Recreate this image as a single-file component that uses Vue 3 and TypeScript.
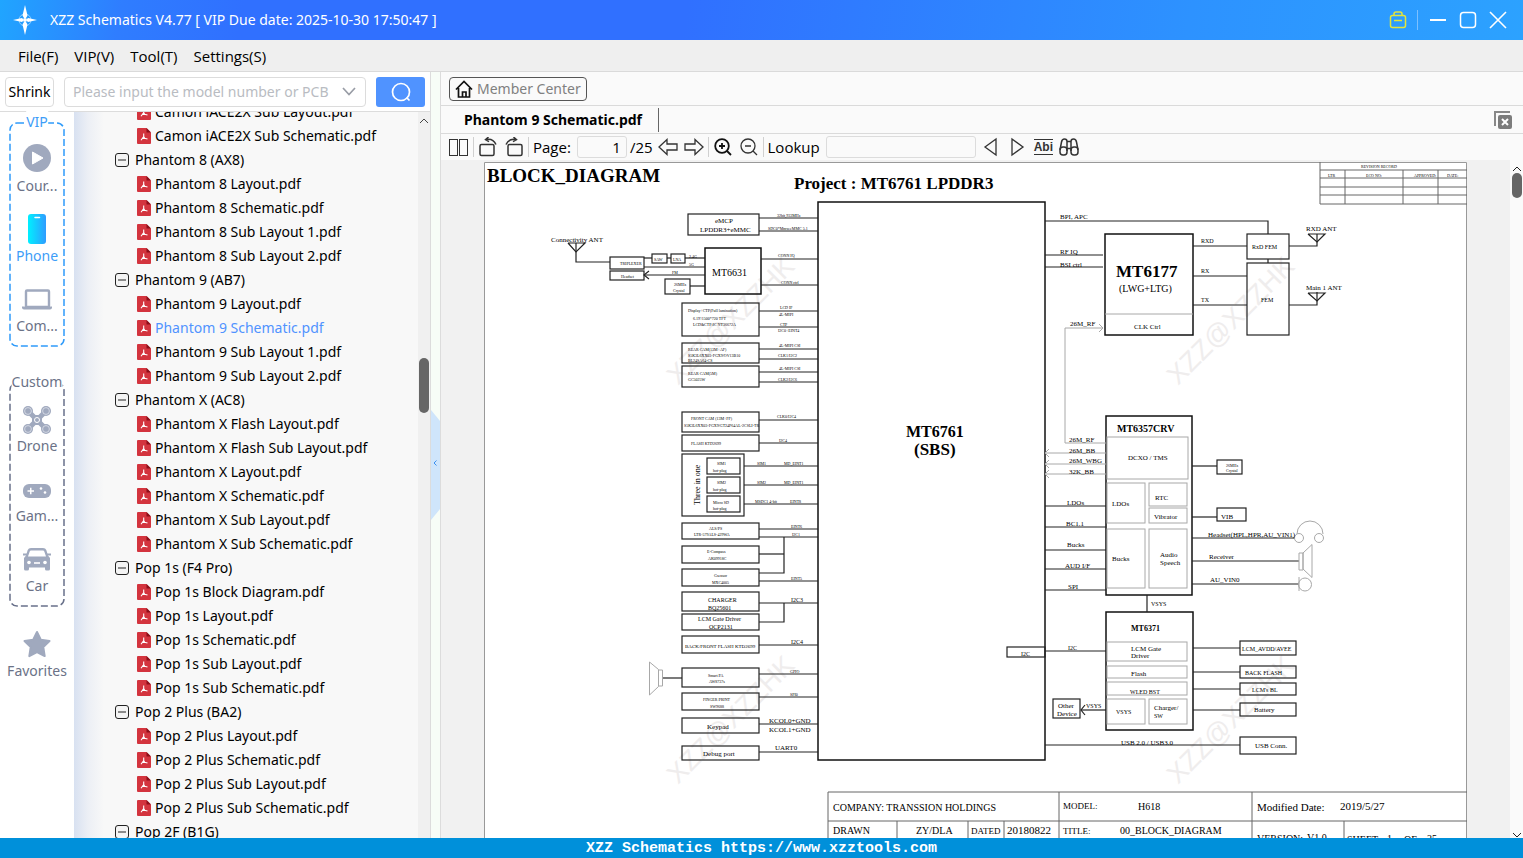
<script setup lang="ts">
import { ref } from 'vue'

interface Model {
  name: string
  files: string[]
}
interface RailItem {
  label: string
  icon: string
}
interface RailGroup {
  title: string
  tone: string
  items: RailItem[]
}
type Box = [x: number, y: number, w: number, h: number, tone?: string]
type Wire = [points: string, tone?: string]
type Label = [x: number, y: number, size: number, text: string, tone?: string]

const menus = ['File(F)', 'VIP(V)', 'Tool(T)', 'Settings(S)']
const keyword = ref('')
const lookup = ref('')
const page = ref('1')
const category = ref('Phone')
const current = ref('Phantom 9 Schematic.pdf')

const railGroups: RailGroup[] = [
  {
    title: 'VIP',
    tone: 'blue',
    items: [
      { label: 'Cour...', icon: 'course' },
      { label: 'Phone', icon: 'phone' },
      { label: 'Com...', icon: 'computer' },
    ],
  },
  {
    title: 'Custom',
    tone: 'gray',
    items: [
      { label: 'Drone', icon: 'drone' },
      { label: 'Gam...', icon: 'game' },
      { label: 'Car', icon: 'car' },
    ],
  },
]

const models: Model[] = [
  { name: '', files: ['Camon iACE2X Sub Layout.pdf', 'Camon iACE2X Sub Schematic.pdf'] },
  {
    name: 'Phantom 8 (AX8)',
    files: ['Phantom 8 Layout.pdf', 'Phantom 8 Schematic.pdf', 'Phantom 8 Sub Layout 1.pdf', 'Phantom 8 Sub Layout 2.pdf'],
  },
  {
    name: 'Phantom 9 (AB7)',
    files: ['Phantom 9 Layout.pdf', 'Phantom 9 Schematic.pdf', 'Phantom 9 Sub Layout 1.pdf', 'Phantom 9 Sub Layout 2.pdf'],
  },
  {
    name: 'Phantom X (AC8)',
    files: [
      'Phantom X Flash Layout.pdf',
      'Phantom X Flash Sub Layout.pdf',
      'Phantom X Layout.pdf',
      'Phantom X Schematic.pdf',
      'Phantom X Sub Layout.pdf',
      'Phantom X Sub Schematic.pdf',
    ],
  },
  {
    name: 'Pop 1s (F4 Pro)',
    files: ['Pop 1s Block Diagram.pdf', 'Pop 1s Layout.pdf', 'Pop 1s Schematic.pdf', 'Pop 1s Sub Layout.pdf', 'Pop 1s Sub Schematic.pdf'],
  },
  {
    name: 'Pop 2 Plus (BA2)',
    files: ['Pop 2 Plus Layout.pdf', 'Pop 2 Plus Schematic.pdf', 'Pop 2 Plus Sub Layout.pdf', 'Pop 2 Plus Sub Schematic.pdf'],
  },
  { name: 'Pop 2F (B1G)', files: [] },
]

// Schematic sheet: blocks, wires and labels in sheet coordinates.
const boxes: Box[] = [
  [818, 202, 227, 558, 'bold'],
  [688, 214, 71, 21],
  [705, 248, 56, 46, 'bold'],
  [610, 257, 34, 12],
  [610, 271, 34, 9],
  [652, 254, 15, 9],
  [671, 254, 14, 9],
  [665, 279, 25, 15],
  [682, 303, 77, 33],
  [682, 343, 77, 20],
  [682, 366, 77, 21],
  [682, 412, 77, 20],
  [682, 435, 77, 16],
  [682, 454, 62, 62],
  [707, 458, 33, 16],
  [707, 477, 33, 16],
  [707, 496, 33, 16],
  [682, 523, 77, 16],
  [682, 546, 77, 17],
  [682, 569, 77, 17],
  [682, 592, 77, 19],
  [682, 614, 77, 16],
  [682, 636, 77, 17],
  [682, 668, 77, 19],
  [682, 693, 77, 17],
  [682, 718, 77, 15],
  [682, 746, 77, 14],
  [1105, 234, 88, 101, 'bold'],
  [1247, 234, 42, 25],
  [1247, 263, 42, 72],
  [1106, 416, 86, 179, 'bold'],
  [1107, 437, 81, 42, 'light'],
  [1107, 483, 38, 40, 'light'],
  [1149, 483, 38, 23, 'light'],
  [1149, 508, 38, 15, 'light'],
  [1107, 529, 38, 59, 'light'],
  [1149, 529, 38, 59, 'light'],
  [1217, 460, 25, 14],
  [1217, 508, 29, 13],
  [1106, 612, 87, 118, 'bold'],
  [1107, 642, 80, 19, 'light'],
  [1107, 666, 80, 12, 'light'],
  [1107, 682, 80, 13, 'light'],
  [1107, 699, 38, 25, 'light'],
  [1149, 699, 38, 25, 'light'],
  [1007, 647, 38, 10],
  [1053, 699, 27, 19],
  [1240, 641, 56, 14],
  [1240, 666, 56, 12],
  [1240, 683, 56, 12],
  [1240, 703, 56, 13],
  [1240, 737, 56, 17],
]

const wires: Wire[] = [
  ['759,218 818,218'], ['759,231 818,231'],
  ['576,252 576,262 610,262'], ['568,243 585,243 576,252 568,243'], ['576,243 576,252'],
  ['644,258 652,258'], ['667,258 671,258'], ['685,258 705,258'], ['644,267 705,267'],
  ['644,275 705,275'], ['649,271 644,275 649,279'], ['690,286 705,286'],
  ['761,259 818,259'], ['761,285 818,285'],
  ['759,311 818,311'], ['759,327 818,327'], ['759,349 818,349'], ['759,359 818,359'],
  ['759,372 818,372'], ['759,382 818,382'], ['759,420 818,420'], ['759,443 818,443'],
  ['744,466 818,466'], ['744,485 818,485'], ['744,504 818,504'],
  ['759,529 818,529'], ['759,537 818,537'], ['759,554 784,554'], ['784,537 784,573 759,573'],
  ['759,581 818,581'], ['759,603 818,603'], ['784,603 784,622 759,622'], ['759,645 818,645'],
  ['662,678 682,678'], ['759,674 818,674'], ['759,697 818,697'], ['759,724 818,724'], ['759,752 818,752'],
  ['1045,221 1268,221 1268,234'], ['1268,259 1268,263'],
  ['1045,255 1103,255'], ['1045,267 1103,267'],
  ['1193,246 1247,246'], ['1193,276 1247,276'], ['1193,305 1247,305'],
  ['1289,246 1317,246 1317,234'], ['1308,234 1325,234 1317,242 1308,234'],
  ['1289,305 1317,305 1317,292'], ['1308,293 1325,293 1317,301 1308,293'],
  ['1105,314 1193,314', 'light'], ['1106,443 1065,443 1065,328 1103,328', 'light'], ['1099,324 1103,328 1099,332', 'light'],
  ['1045,453 1106,453', 'light'], ['1045,464 1106,464', 'light'], ['1045,474 1106,474', 'light'],
  ['1049,449 1045,453 1049,457', 'light'], ['1049,460 1045,464 1049,468', 'light'], ['1049,470 1045,474 1049,478', 'light'],
  ['1045,506 1106,506'], ['1045,527 1106,527'], ['1045,550 1106,550'], ['1045,569 1106,569'], ['1045,590 1106,590'],
  ['1192,466 1217,466'], ['1192,517 1217,517'], ['1192,538 1295,538'], ['1192,561 1299,561'], ['1192,584 1299,584'],
  ['1147,595 1147,612'], ['1045,651 1106,651'],
  ['1193,648 1240,648'], ['1193,672 1240,672'], ['1193,689 1240,689'], ['1193,710 1240,710'],
  ['1106,710 1081,710'], ['1085,705 1081,710 1085,715'],
  ['1045,745 1240,745'],
]

const titleBlock: Wire[] = [
  ['828,858 828,792 1467,792'], ['828,821 1467,821'], ['1059,792 1059,858'], ['1252,792 1252,858'],
  ['897,821 897,858'], ['968,821 968,858'], ['1004,821 1004,858'], ['1344,821 1344,858'],
  ['1320,170 1467,170'], ['1320,178 1467,178'], ['1320,187 1467,187'], ['1320,195 1467,195'],
  ['1467,204 1320,204 1320,162'], ['1345,170 1345,204'], ['1403,170 1403,204'], ['1438,170 1438,204'],
]

const labels: Label[] = [
  [487, 182, 19, 'BLOCK_DIAGRAM', 'strong'],
  [794, 189, 17, 'Project : MT6761 LPDDR3', 'strong'],
  [906, 437, 16, 'MT6761', 'strong'],
  [914, 455, 17, '(SBS)', 'strong'],
  [1116, 277, 17, 'MT6177', 'strong'],
  [1119, 292, 10, '(LWG+LTG)'],
  [1117, 432, 10, 'MT6357CRV', 'strong'],
  [1131, 631, 8, 'MT6371', 'strong'],
  [1361, 168, 4, 'REVISION RECORD'],
  [1328, 177, 4, 'LTR'], [1366, 177, 4, 'ECO NO:'], [1414, 177, 4, 'APPROVED:'], [1447, 177, 4, 'DATE:'],
  [715, 223, 7, 'eMCP'], [700, 232, 7, 'LPDDR3+eMMC'],
  [777, 217, 4, '32bit,933MHz'], [768, 230, 4, 'SDC0*Mmw.eMMC 5.1'],
  [551, 242, 7, 'Connectivity ANT'],
  [620, 265, 4, 'TRIPLEXER'], [621, 278, 4, 'Headset'], [654, 261, 4, 'SAW'], [673, 261, 4, 'LNA'],
  [689, 258, 4, '2.4G'], [689, 266, 4, '5G'], [672, 274, 4, 'FM'], [674, 286, 4, '26MHz'], [673, 292, 4, 'Crystal'],
  [712, 276, 10, 'MT6631'],
  [778, 257, 4, 'CONN IQ'], [781, 284, 4, 'CONN ctrl'],
  [688, 312, 4, 'Display+CTP(Full lamination)'], [693, 320, 4, '6.19\'/1500*720 TFT'], [693, 326, 4, 'LCD&CTP:IC NT36672A'],
  [780, 309, 4, 'LCD IF'], [779, 316, 4, '4L-MIPI'], [780, 326, 4, 'CTP'], [778, 332, 4, 'I2C0+EINT4'],
  [688, 351, 4, 'REAR CAM(13M+AF)'], [688, 357, 4, 'S5K3L6XX03-FGX9/OV13B10'], [688, 362, 4, 'BL24SA64-CS'],
  [779, 347, 4, '4L-MIPI CSI'], [778, 357, 4, 'CLK1/I2C2'],
  [688, 375, 4, 'REAR CAM(5M)'], [688, 381, 4, 'GC5025W'],
  [779, 370, 4, '4L-MIPI CSI'], [778, 381, 4, 'CLK2/I2C6'],
  [691, 420, 4, 'FRONT CAM (13M+FF)'], [684, 427, 4, 'S5K3L6XX03-FGX9/GT24P64AL-2CSLI-TR'], [777, 418, 4, 'CLK0/I2C4'],
  [691, 445, 4, 'FLASH KTD2699'], [779, 442, 4, 'I2C4'],
  [717, 465, 4, 'SIM1'], [713, 472, 4, 'hot-plug'], [717, 484, 4, 'SIM2'], [713, 491, 4, 'hot-plug'], [713, 504, 4, 'Micro SD'], [713, 510, 4, 'hot-plug'],
  [757, 465, 4, 'SIM1'], [784, 465, 4, 'MD_EINT1'], [757, 484, 4, 'SIM2'], [784, 484, 4, 'MD_EINT1'], [755, 503, 4, 'MSDC1 4-bit'], [790, 503, 4, 'EINT8'],
  [709, 530, 4, 'ALS/PS'], [694, 536, 4, 'LTR-579ALS-429WA'], [791, 528, 4, 'EINT6'], [792, 536, 4, 'I2C1'],
  [707, 553, 4, 'E-Compass'], [708, 560, 4, 'AK09918C'],
  [714, 577, 4, 'Gsensor'], [712, 584, 4, 'MXC4005'], [791, 580, 4, 'EINT5'],
  [708, 602, 6, 'CHARGER'], [708, 610, 6, 'BQ25601'], [791, 602, 6, 'I2C3'],
  [698, 621, 6, 'LCM Gate Driver'], [709, 629, 6, 'OCP2131'],
  [685, 648, 5, 'BACK/FRONT FLASH KTD2699'], [791, 644, 6, 'I2C4'],
  [708, 677, 4, 'Smart PA'], [709, 683, 4, 'AW8737s'], [790, 673, 4, 'GPIO'],
  [703, 701, 4, 'FINGER PRINT'], [710, 708, 4, 'SW9688'], [790, 696, 4, 'SPI0'],
  [707, 729, 7, 'Keypad'], [769, 723, 7, 'KCOL0+GND'], [769, 732, 7, 'KCOL1+GND'],
  [703, 756, 7, 'Debug port'], [775, 750, 7, 'UART0'],
  [1060, 219, 7, 'BPI, APC'], [1060, 254, 7, 'RF IQ'], [1060, 267, 7, 'BSI ctrl'],
  [1201, 243, 6, 'RXD'], [1201, 273, 6, 'RX'], [1201, 302, 6, 'TX'],
  [1306, 231, 7, 'RXD ANT'], [1306, 290, 7, 'Main 1 ANT'],
  [1252, 249, 6, 'RxD FEM'], [1261, 302, 6, 'FEM'],
  [1134, 329, 7, 'CLK Ctrl'], [1070, 326, 7, '26M_RF'],
  [1069, 442, 7, '26M_RF'], [1069, 453, 7, '26M_BB'], [1069, 463, 7, '26M_WBG'], [1069, 474, 7, '32K_BB'],
  [1128, 460, 7, 'DCXO / TMS'], [1112, 506, 7, 'LDOs'], [1155, 500, 7, 'RTC'], [1154, 519, 7, 'Vibrator'],
  [1112, 561, 7, 'Bucks'], [1160, 557, 7, 'Audio'], [1160, 565, 7, 'Speech'],
  [1067, 505, 7, 'LDOs'], [1066, 526, 7, 'BC1.1'], [1067, 547, 7, 'Bucks'], [1065, 568, 7, 'AUD I/F'], [1068, 589, 7, 'SPI'],
  [1226, 467, 4, '26MHz'], [1226, 472, 4, 'Crystal'], [1221, 519, 7, 'VIB'],
  [1208, 537, 7, 'Headset(HPL,HPR,AU_VIN1)'], [1209, 559, 7, 'Receiver'], [1210, 582, 7, 'AU_VIN0'],
  [1151, 606, 6, 'VSYS'], [1021, 656, 6, 'I2C'], [1068, 650, 6, 'I2C'],
  [1131, 651, 7, 'LCM Gate'], [1131, 658, 7, 'Driver'], [1131, 676, 7, 'Flash'], [1130, 694, 6, 'WLED BST'],
  [1116, 714, 6, 'VSYS'], [1154, 710, 7, 'Charger/'], [1154, 718, 6, 'SW'],
  [1058, 708, 7, 'Other'], [1057, 716, 7, 'Device'], [1086, 708, 6, 'VSYS'],
  [1242, 651, 6, 'LCM_AVDD/AVEE'], [1245, 675, 6, 'BACK FLASH'], [1252, 692, 6, "LCM's BL"], [1254, 712, 7, 'Battery'], [1255, 748, 7, 'USB Conn.'],
  [1121, 745, 7, 'USB 2.0 / USB3.0'],
  [833, 811, 10, 'COMPANY: TRANSSION HOLDINGS'], [833, 834, 10, 'DRAWN'], [916, 834, 10, 'ZY/DLA'], [971, 834, 9, 'DATED'], [1007, 834, 11, '20180822'],
  [1063, 809, 9, 'MODEL:'], [1138, 810, 10, 'H618'], [1063, 834, 9, 'TITLE:'], [1120, 834, 10, '00_BLOCK_DIAGRAM'],
  [1257, 811, 11, 'Modified Date:'], [1340, 810, 11, '2019/5/27'],
  [1257, 842, 10, 'VERSION:'], [1307, 841, 10, 'V1.0'], [1347, 843, 10, 'SHEET'], [1387, 842, 10, '1'], [1404, 843, 10, 'OF'], [1427, 842, 10, '25'],
]

const watermarks = [
  [730, 320],
  [1230, 320],
  [730, 719],
  [1230, 719],
]
</script>

<template>
  <div class="app">
    <header class="titlebar">
      <svg class="logo" width="26" height="30" viewBox="0 0 26 30">
        <circle cx="13" cy="15" r="6" fill="none" stroke="#8fd0ff" stroke-width="1" />
        <path d="M13 0l2.5 10.500-1.500 2.500h-2l-1.500-2.500zM13 30l2.500-10.500-1.500-2.500h-2l-1.500 2.500zM1 15l9-2 1 1v2l-1 1zM25 15l-9-2-1 1v2l1 1z" fill="#fff" />
        <circle cx="13" cy="15" r="2" fill="#fff" />
      </svg>
      <h1>XZZ Schematics V4.77 [ VIP Due date: 2025-10-30 17:50:47 ]</h1>
      <div class="window-tools">
        <button type="button" aria-label="Toolbox">
          <svg width="18" height="18" viewBox="0 0 18 18" fill="none" stroke="#e3e53c" stroke-width="1.500">
            <rect x="1.500" y="4.500" width="15" height="12" rx="2" /><path d="M5 4.500V3q0-2 2-2h4q2 0 2 2v1.500M5 9.500h8" />
          </svg>
        </button>
        <span class="bar"></span>
        <button type="button" aria-label="Minimize">
          <svg width="18" height="18" viewBox="0 0 18 18" stroke="#fff" stroke-width="2"><path d="M1 9h16" /></svg>
        </button>
        <button type="button" aria-label="Maximize">
          <svg width="18" height="18" viewBox="0 0 18 18" fill="none" stroke="#fff" stroke-width="1.500"><rect x="1.500" y="1.500" width="15" height="15" rx="3" /></svg>
        </button>
        <button type="button" aria-label="Close">
          <svg width="18" height="18" viewBox="0 0 18 18" stroke="#fff" stroke-width="1.600"><path d="M1 1l16 16M17 1L1 17" /></svg>
        </button>
      </div>
    </header>

    <nav class="menubar">
      <button v-for="m in menus" :key="m" type="button">{{ m }}</button>
    </nav>

    <main class="workspace">
      <section class="browser">
        <form class="search" @submit.prevent>
          <button type="button" class="shrink">Shrink</button>
          <div class="combo">
            <input v-model="keyword" type="text" aria-label="Model number or PCB" placeholder="Please input the model number or PCB" />
            <button type="button" aria-label="Show history">
              <svg width="14" height="9" viewBox="0 0 14 9" fill="none" stroke="#999da6" stroke-width="1.700"><path d="M1 1l6 6.500L13 1" /></svg>
            </button>
          </div>
          <button type="submit" class="go" aria-label="Search">
            <svg width="20" height="20" viewBox="0 0 20 20" fill="none" stroke="#fff" stroke-width="1.700"><circle cx="10" cy="10" r="8.500" /><path d="M15.500 15.500l3 3" /></svg>
          </button>
        </form>

        <div class="panes">
          <aside class="rail">
            <section v-for="g in railGroups" :key="g.title" class="group" :class="g.tone">
              <svg class="frame" width="56" height="225" viewBox="0 0 56 225" fill="none">
                <rect x="1" y="1" width="54" height="223" rx="7" stroke-width="1.500" stroke-dasharray="7 3" />
              </svg>
              <h2>{{ g.title }}</h2>
              <button v-for="i in g.items" :key="i.label" type="button" class="cat" :class="{ on: i.label === category }" @click="category = i.label">
                <svg width="32" height="32" viewBox="0 0 32 32" fill="#a0a9be">
                  <template v-if="i.icon === 'course'">
                    <circle cx="16" cy="16" r="14" /><path d="M11.500 10v12L22 16z" fill="#fff" stroke="#fff" stroke-linejoin="round" />
                  </template>
                  <template v-else-if="i.icon === 'phone'">
                    <defs><linearGradient id="phone-fill"><stop offset="0" stop-color="#00f0ff" /><stop offset="1" stop-color="#2f9cff" /></linearGradient></defs>
                    <rect x="7" y="2" width="18" height="30" rx="3" fill="url(#phone-fill)" /><path d="M14 5.500h4.500" stroke="#fff" stroke-width="1.500" stroke-linecap="round" />
                  </template>
                  <template v-else-if="i.icon === 'computer'">
                    <rect x="5" y="8.500" width="23" height="16.500" rx="1" fill="none" stroke="#a0a9be" stroke-width="2.400" /><path d="M1 24.500h30v1q0 2-2 2H3q-2 0-2-2z" />
                  </template>
                  <template v-else-if="i.icon === 'drone'">
                    <path d="M8 10l16 16M24 10L8 26" stroke="#a0a9be" stroke-width="5" />
                    <g v-for="p in [[7, 9], [25, 9], [7, 27], [25, 27]]" :key="p.join()">
                      <circle :cx="p[0]" :cy="p[1]" r="5" /><circle :cx="p[0]" :cy="p[1]" r="3.400" fill="none" stroke="#e6e9f0" stroke-width="0.700" />
                    </g>
                    <rect x="11" y="13" width="10" height="10" rx="2" /><circle cx="16" cy="18" r="2.500" fill="#a0a9be" stroke="#fff" />
                  </template>
                  <template v-else-if="i.icon === 'game'">
                    <rect x="2" y="12" width="28" height="14" rx="6" />
                    <path d="M6.500 19h6.500M9.750 15.750v6.500" stroke="#fff" stroke-width="1.500" /><circle cx="20" cy="16.500" r="1.300" fill="#fff" /><circle cx="24" cy="20.500" r="1.300" fill="#fff" />
                  </template>
                  <template v-else>
                    <path d="M10 6h12q2.500 0 3.300 2L27 13.500l2 2.500v11q0 1.500-1.500 1.500h-2q-1.500 0-1.500-1.500v-1.500H8V27q0 1.500-1.500 1.500h-2Q3 28.500 3 27V16l2-2.500L6.700 8Q7.500 6 10 6z" /><path d="M2 12.500h5M25 12.500h5" stroke="#a0a9be" stroke-width="2" /><path d="M10 8.500h12q1 0 1.300 1l1.700 5H7l1.700-5q.3-1 1.300-1z" fill="#fff" />
                    <circle cx="8" cy="20.500" r="1.800" fill="#fff" /><circle cx="24" cy="20.500" r="1.800" fill="#fff" /><path d="M13 21h6" stroke="#fff" stroke-width="1.600" />
                  </template>
                </svg>
                <span>{{ i.label }}</span>
              </button>
            </section>
            <button type="button" class="cat favorites">
              <svg width="32" height="32" viewBox="0 0 32 32" fill="#a0a9be" stroke="#a0a9be" stroke-width="2" stroke-linejoin="round">
                <path d="M16 5l3.800 7.700 8.700 1.300-6.200 6.100 1.400 9L16 25.100l-7.700 4 1.400-9-6.200-6.100 8.700-1.300z" />
              </svg>
              <span>Favorites</span>
            </button>
          </aside>

          <div class="tree">
            <ul>
              <li v-for="m in models" :key="m.name">
                <button v-if="m.name" type="button" class="model">
                  <svg width="14" height="14" viewBox="0 0 14 14" fill="#f4f4f4" stroke="#222"><rect x="0.500" y="0.500" width="13" height="13" rx="2.500" /><path d="M3 7h8" /></svg>
                  {{ m.name }}
                </button>
                <ul>
                  <li v-for="f in m.files" :key="f">
                    <button type="button" class="file" :class="{ open: f === current }" @click="current = f">
                      <svg width="14" height="16" viewBox="0 0 14 16">
                        <path d="M1 0h8.500L14 4.500V15q0 1-1 1H1q-1 0-1-1V1q0-1 1-1z" fill="#d3343e" /><path d="M9.500 0L14 4.500H9.500z" fill="#8b0f1a" />
                        <path d="M6.700 5.500v3L4 12.300M6.700 8.500l1 1.700 2.800.8M5.300 10.400l2.600-.3" fill="none" stroke="#fff" stroke-width="1.100" />
                      </svg>
                      {{ f }}
                    </button>
                  </li>
                </ul>
              </li>
            </ul>
          </div>
          <div class="scroll">
            <svg width="10" height="6" viewBox="0 0 10 6" fill="none" stroke="#444"><path d="M1 5l4-4 4 4" /></svg>
            <span class="thumb"></span>
          </div>
        </div>
      </section>

      <div class="splitter">
        <button type="button" aria-label="Collapse panel">
          <svg width="9" height="110" viewBox="0 0 9 110"><path d="M0 0l9 11v88l-9 11z" fill="#cfe5fb" /><path d="M5.500 50.500L3 53l2.500 2.500" fill="none" stroke="#3b8ff0" /></svg>
        </button>
      </div>

      <section class="reader">
        <div class="member-row">
          <button type="button" class="member">
            <svg width="18" height="18" viewBox="0 0 18 18" fill="none" stroke="#111" stroke-width="1.700"><path d="M1 9.500L9 1.500l8 8M3.500 8v9h11V8M7.500 17v-5h3.500v5" /></svg>
            Member Center
          </button>
        </div>
        <div class="tabs">
          <button type="button" class="tab">{{ current }}</button>
          <button type="button" class="close-all" aria-label="Close all tabs">
            <svg width="18" height="18" viewBox="0 0 18 18"><path d="M1 15V1h15" fill="none" stroke="#888" stroke-width="2" /><rect x="4" y="4" width="14" height="14" rx="2" fill="#7c7c7c" /><path d="M8 8l6 6M14 8l-6 6" stroke="#fff" stroke-width="2" /></svg>
          </button>
        </div>
        <div class="toolbar">
          <button type="button" aria-label="Two pages">
            <svg width="20" height="20" viewBox="0 0 20 20" fill="none" stroke="#333"><rect x="0.500" y="2.500" width="8" height="16" /><rect x="10.500" y="2.500" width="8" height="16" /></svg>
          </button>
          <i></i>
          <button type="button" aria-label="Rotate left">
            <svg width="20" height="20" viewBox="0 0 20 20" fill="none" stroke="#333" stroke-width="1.500"><rect x="2" y="7.500" width="14" height="11" rx="1.500" /><path d="M8 2.500q7-1.500 10 5M10.500 0L7.500 2.700l3.500 2" /></svg>
          </button>
          <button type="button" aria-label="Rotate right">
            <svg width="20" height="20" viewBox="0 0 20 20" fill="none" stroke="#333" stroke-width="1.500"><rect x="4" y="7.500" width="14" height="11" rx="1.500" /><path d="M12 2.500q-7-1.500-10 5M9.500 0l3 2.700-3.500 2" /></svg>
          </button>
          <i></i>
          <label for="page">Page:</label>
          <input id="page" v-model="page" type="text" class="page-no" />
          <span class="total">/25</span>
          <button type="button" aria-label="Previous page">
            <svg width="20" height="20" viewBox="0 0 20 20" fill="none" stroke="#333" stroke-width="1.300"><path d="M1 10l8-7.500v4.500h10v6H9v4.500z" /></svg>
          </button>
          <button type="button" aria-label="Next page">
            <svg width="20" height="20" viewBox="0 0 20 20" fill="none" stroke="#333" stroke-width="1.300"><path d="M19 10l-8-7.500v4.500H1v6h10v4.500z" /></svg>
          </button>
          <i></i>
          <button type="button" aria-label="Zoom in">
            <svg width="20" height="20" viewBox="0 0 20 20" fill="none" stroke="#111" stroke-width="1.800"><circle cx="9" cy="9" r="6.800" /><path d="M14 14l4 4M6 9h6M9 6v6" /></svg>
          </button>
          <button type="button" aria-label="Zoom out">
            <svg width="20" height="20" viewBox="0 0 20 20" fill="none" stroke="#333" stroke-width="1.300"><circle cx="9" cy="9" r="7" /><path d="M14 14l4 4M6 9h6" /></svg>
          </button>
          <i></i>
          <label for="lookup">Lookup</label>
          <input id="lookup" v-model="lookup" type="text" class="find" />
          <button type="button" aria-label="Find previous">
            <svg width="20" height="20" viewBox="0 0 20 20" fill="none" stroke="#333" stroke-width="1.300"><path d="M14 2v16L3 10z" /></svg>
          </button>
          <button type="button" aria-label="Find next">
            <svg width="20" height="20" viewBox="0 0 20 20" fill="none" stroke="#333" stroke-width="1.300"><path d="M4 2v16l11-8z" /></svg>
          </button>
          <button type="button" class="abi">Abi</button>
          <button type="button" aria-label="Find in document">
            <svg width="20" height="20" viewBox="0 0 20 20" fill="none" stroke="#333" stroke-width="1.500"><rect x="1" y="10" width="7" height="8" rx="3" /><rect x="12" y="10" width="7" height="8" rx="3" /><path d="M1 13L2.500 5q.5-3 3-3T8 4.500V14M19 13l-1.500-8q-.5-3-3-3T12 4.500V14M8 4.500h4M8 11.500h4" /></svg>
          </button>
        </div>
        <div class="viewer">
          <div class="sheet-area">
            <svg class="sheet" width="983" height="696" viewBox="484 162 983 696">
              <path d="M484.500 858V162.500H1466.500V858" class="edge" />
              <text v-for="(w, n) in watermarks" :key="'m' + n" class="mark" x="0" y="10" :transform="`translate(${w[0]} ${w[1]}) rotate(-45)`">XZZ@XZZHK</text>
              <rect v-for="(b, n) in boxes" :key="'b' + n" :x="b[0]" :y="b[1]" :width="b[2]" :height="b[3]" :class="b[4] || 'thin'" />
              <polyline v-for="(w, n) in wires" :key="'w' + n" :points="w[0]" :class="w[1] || 'thin'" />
              <polyline v-for="(w, n) in titleBlock" :key="'t' + n" :points="w[0]" class="rule" />
              <g class="light">
                <path d="M649.500 662v33l9-8.500v-17zM658.500 670h4v16h-4z" />
                <path d="M1297 534a13 13 0 0 1 26 0" /><circle cx="1299" cy="538" r="4.500" /><circle cx="1319" cy="538" r="4.500" />
                <path d="M1299 553h4v17h-4zM1303 553l9-8.500v33l-9-8.500zM1299 577v14" /><circle cx="1305" cy="584.500" r="6.500" />
              </g>
              <text class="wire-name" transform="translate(700 505) rotate(-90)">Three in one</text>
              <text v-for="(l, n) in labels" :key="'l' + n" :x="l[0]" :y="l[1]" :font-size="l[2]" :class="l[4]">{{ l[3] }}</text>
            </svg>
          </div>
          <div class="scroll doc-scroll">
            <svg width="10" height="6" viewBox="0 0 10 6" fill="none" stroke="#222"><path d="M1 5l4-4 4 4" /></svg>
            <span class="thumb"></span>
            <svg class="down" width="10" height="6" viewBox="0 0 10 6" fill="none" stroke="#222"><path d="M1 1l4 4 4-4" /></svg>
          </div>
        </div>
      </section>
    </main>

    <footer class="status">XZZ Schematics https://www.xzztools.com</footer>
  </div>
</template>

<style>
body {
  margin: 0;
  overflow: hidden;
}
</style>

<style scoped>
.app {
  display: flex;
  flex-direction: column;
  height: 100vh;
  font-family: 'Noto Sans', 'Open Sans', sans-serif;
  font-size: 14px;
  line-height: 24px;
  color: #000;
}
.app * {
  box-sizing: border-box;
}
button,
input {
  font: inherit;
  color: inherit;
  margin: 0;
  padding: 0;
  border: 0;
  background: none;
}
button {
  display: flex;
  align-items: center;
  justify-content: center;
  white-space: nowrap;
}
svg {
  display: block;
  flex: none;
}
ul {
  list-style: none;
  margin: 0;
  padding: 0;
}
.titlebar {
  flex: none;
  display: flex;
  align-items: center;
  height: 40px;
  padding: 0 16px 0 12px;
  gap: 12px;
  color: #fff;
  background: linear-gradient(100deg, #20a5ff 0, #2f7dff 8%, #3070ff 16%, #3070ff 45%, #2d92ff 78%, #2ca2ff 100%);
}
.titlebar h1 {
  margin: 0;
  font-size: 14px;
  font-weight: 400;
}
.window-tools {
  display: flex;
  align-items: center;
  gap: 12px;
  margin-left: auto;
}
.window-tools .bar {
  width: 1px;
  height: 20px;
  margin-left: -2px;
  margin-right: -1px;
  background: #7dc0ff;
}
.menubar {
  flex: none;
  display: flex;
  gap: 16px;
  height: 32px;
  padding: 0 18px;
  background: #efefef;
  border-bottom: 1px solid #dadada;
}
.menubar,
.toolbar {
  font-family: 'Open Sans', 'Noto Sans', sans-serif;
  font-size: 15px;
}
.workspace {
  flex: 1;
  display: flex;
  min-height: 0;
}
.browser {
  flex: none;
  width: 431px;
  display: flex;
  flex-direction: column;
  border-right: 1px solid #dcdcdc;
}
.search {
  flex: none;
  display: flex;
  align-items: center;
  gap: 10px;
  height: 40px;
  padding: 0 5px;
  border-bottom: 1px solid #dcdcdc;
}
.shrink,
.combo {
  height: 30px;
  border: 1px solid #dcdcdc;
  border-radius: 4px;
}
.shrink {
  width: 49px;
}
.combo {
  flex: 1;
  display: flex;
  padding: 0 9px 0 8px;
  gap: 4px;
  background: #fff;
}
.combo input {
  flex: 1;
  min-width: 0;
}
.combo input::placeholder {
  color: #b9bcc2;
}
.go {
  width: 49px;
  height: 30px;
  border-radius: 3px;
  background: #5093ff;
}
.panes {
  flex: 1;
  display: flex;
  min-height: 0;
}
.rail {
  flex: none;
  width: 74px;
  padding-top: 10px;
  background: #fff;
}
.group {
  position: relative;
  display: flex;
  flex-direction: column;
  gap: 14px;
  width: 56px;
  height: 225px;
  margin: 0 auto 35px 9px;
  padding-top: 20px;
}
.frame {
  position: absolute;
  top: 0;
  left: 0;
}
.blue .frame {
  stroke: #2f9bfa;
}
.gray .frame {
  stroke: #68708a;
}
.group h2 {
  position: absolute;
  top: -12px;
  left: 50%;
  transform: translateX(-50%);
  margin: 0;
  background: #fff;
  font-size: 14px;
  font-weight: 400;
}
.blue h2 {
  color: #3d9df8;
}
.gray h2 {
  color: #6b7287;
}
.cat {
  position: relative;
  flex-direction: column;
  width: 100%;
  height: 56px;
  color: #6b7287;
}
.cat.on {
  color: #3d9df8;
}
.favorites {
  margin-top: -15px;
}
.tree {
  flex: 1;
  min-width: 0;
  overflow: hidden;
  background: linear-gradient(90deg, #d8e1f1 0, #eceff5 14px, #f8f8f8 30px);
}
.tree > ul {
  margin-top: -12px;
}
.model,
.file {
  height: 24px;
}
.model {
  gap: 6px;
  margin-left: 41px;
}
.file {
  gap: 4px;
  margin-left: 63px;
}
.file.open {
  color: #5093ff;
}
.scroll {
  flex: none;
  display: flex;
  flex-direction: column;
  align-items: center;
  width: 12px;
  padding-top: 6px;
  background: #f0f0f0;
}
.scroll .thumb {
  width: 10px;
  height: 55px;
  margin-top: 234px;
  border-radius: 5px;
  background: #666;
}
.splitter {
  flex: none;
  display: flex;
  align-items: center;
  width: 9px;
  background: #f7fdf7;
}
.splitter button {
  margin-top: 20px;
}
.reader {
  flex: 1;
  min-width: 0;
  display: flex;
  flex-direction: column;
  border-left: 1px solid #dcdcdc;
  background: #fafafa;
}
.member-row,
.tabs {
  flex: none;
  display: flex;
  align-items: center;
  border-bottom: 1px solid #dadada;
}
.member-row {
  height: 34px;
  padding-left: 8px;
}
.member {
  height: 24px;
  gap: 4px;
  padding: 0 5px;
  border: 1px solid #555;
  border-radius: 4px;
  color: #808080;
}
.tabs {
  height: 28px;
  padding: 0 11px 0 8px;
}
.tab {
  padding: 0 16px 0 15px;
  border-right: 1px solid #666;
  font-weight: 700;
}
.close-all {
  margin-left: auto;
}
.toolbar {
  flex: none;
  display: flex;
  align-items: center;
  gap: 6px;
  height: 26px;
  padding-left: 8px;
}
.toolbar i {
  width: 1px;
  height: 20px;
  margin: 0 -2px;
  background: #d0d0d0;
}
.toolbar input {
  height: 22px;
  border: 1px solid #dcdcdc;
  border-radius: 3px;
}
.toolbar .page-no {
  width: 50px;
  padding-right: 5px;
  text-align: right;
}
.total {
  margin: 0 -1px 0 -3px;
}
.find {
  width: 150px;
}
.abi {
  height: 16px;
  border-top: 1px solid #333;
  border-bottom: 1px solid #333;
  color: #333;
  font: 700 12px/14px 'Liberation Sans', sans-serif;
}
.viewer {
  flex: 1;
  min-height: 0;
  display: flex;
}
.sheet-area {
  flex: 1;
  min-width: 0;
  display: flex;
  justify-content: center;
  align-items: flex-start;
  padding-top: 2px;
  overflow: hidden;
  background: #f1f1f1;
}
.doc-scroll {
  width: 13px;
  background: #fafafa;
}
.doc-scroll .thumb {
  height: 25px;
  margin-top: 1px;
}
.doc-scroll .down {
  margin-top: auto;
}
.sheet {
  background: #fff;
  font-family: 'Liberation Serif', serif;
  fill: #000;
}
.sheet rect,
.sheet polyline,
.sheet path,
.sheet circle {
  fill: none;
}
.thin {
  stroke: #222;
  stroke-width: 1.2px;
}
.bold {
  stroke: #111;
  stroke-width: 1.5px;
}
.light {
  stroke: #a8a8a8;
  stroke-width: 1px;
}
.rule {
  stroke: #666;
  stroke-width: 1px;
}
.edge {
  stroke: #999;
}
.strong {
  font-weight: 700;
}
.wire-name {
  font-size: 8px;
}
.mark {
  fill: #efeded;
  font: 27px 'Liberation Sans', sans-serif;
  text-anchor: middle;
}
.status {
  flex: none;
  height: 20px;
  background: #0090da;
  color: #fff;
  font: 700 15px/22px 'Liberation Mono', monospace;
  text-align: center;
}
</style>
